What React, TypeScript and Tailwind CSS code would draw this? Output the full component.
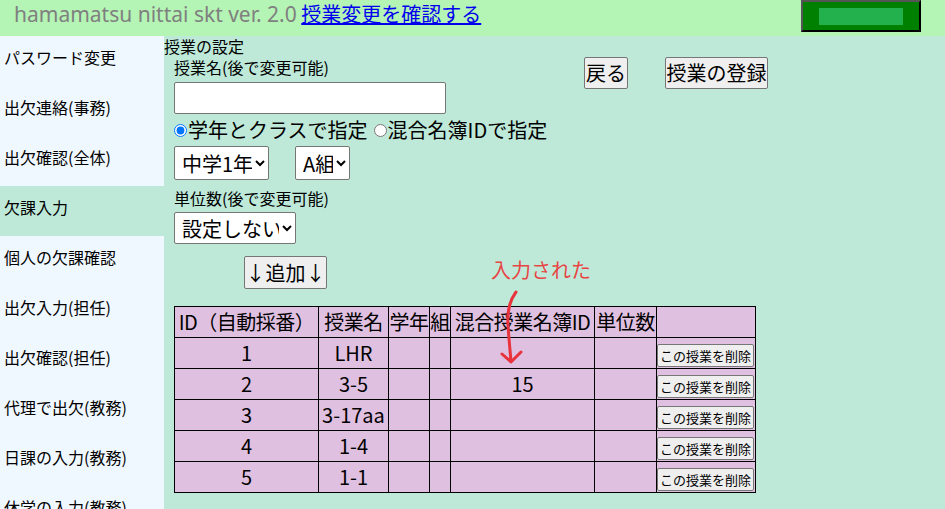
import React from "react";

const menu = [
  "パスワード変更",
  "出欠連絡(事務)",
  "出欠確認(全体)",
  "欠課入力",
  "個人の欠課確認",
  "出欠入力(担任)",
  "出欠確認(担任)",
  "代理で出欠(教務)",
  "日課の入力(教務)",
  "休学の入力(教務)",
];

const rows = [
  { id: "1", name: "LHR", mix: "" },
  { id: "2", name: "3-5", mix: "15" },
  { id: "3", name: "3-17aa", mix: "" },
  { id: "4", name: "1-4", mix: "" },
  { id: "5", name: "1-1", mix: "" },
];

const font = "font-['Noto_Sans_CJK_JP','Noto_Sans',sans-serif]";

const App = () => {
  return (
    <div className={`relative w-[945px] h-[509px] overflow-hidden bg-[#bee9d8] text-black ${font}`}>
      <header className="flex h-[36px] bg-[#b4f4b4]">
        <div className="pl-[14px] pt-[1px] text-[20px] leading-[26px]">
          <span className="text-[21px] text-[#808080] font-['Noto_Sans',sans-serif]">hamamatsu nittai skt ver. 2.0</span>{" "}
          <a href="#" className="text-[#0000ee] underline">
            授業変更を確認する
          </a>
        </div>
        <div className="ml-auto mr-[24px] flex h-[32px] w-[120px] items-center justify-center border-2 border-t-[#555] border-l-[#555] border-r-black border-b-black bg-[#008000]">
          <div className="h-[17px] w-[84px] bg-[#22b14c]" />
        </div>
      </header>

      <div className="flex">
        <nav className="w-[164px] shrink-0 bg-[#f0f8ff]">
          {menu.map((m) => (
            <div
              key={m}
              className={`h-[50px] pl-[4px] pt-[10px] text-[16px] leading-[22px] ${m === "欠課入力" ? "bg-[#bee9d8]" : ""}`}
            >
              {m}
            </div>
          ))}
        </nav>

        <main className="flex-1">
          <div className="text-[16px] leading-[21px]">授業の設定</div>
          <div className="pl-[10px]">
            <div className="flex">
              <div className="flex w-[410px] flex-col">
                <div className="text-[16px] leading-[20px]">授業名(後で変更可能)</div>
                <input
                  type="text"
                  className="mt-[5px] h-[32px] w-[272px] rounded-[2px] border border-[#767676] bg-white"
                />
                <div className="mt-[4px] flex h-[24px] items-center whitespace-nowrap text-[20px] leading-[24px]">
                  <input type="radio" name="mode" defaultChecked className="m-0 mr-[1px] h-[13px] w-[13px]" />
                  <span>学年とクラスで指定</span>
                  <input type="radio" name="mode" className="m-0 ml-[6px] mr-[1px] h-[13px] w-[13px]" />
                  <span>混合名簿IDで指定</span>
                </div>
                <div className="mt-[4px] flex h-[34px] gap-[26px]">
                  <select className="h-[34px] w-[95px] rounded-[2px] border border-[#767676] bg-white pl-[3px] text-[20px]">
                    <option>中学1年</option>
                  </select>
                  <select className="h-[34px] w-[55px] rounded-[2px] border border-[#767676] bg-white pl-[3px] text-[20px]">
                    <option>A組</option>
                  </select>
                </div>
                <div className="mt-[8px] text-[16px] leading-[20px]">単位数(後で変更可能)</div>
                <select className="mt-[4px] h-[32px] w-[122px] rounded-[2px] border border-[#767676] bg-white pl-[3px] text-[20px]">
                  <option>設定しない</option>
                </select>
                <button className="mt-[12px] ml-[70px] h-[33px] w-[83px] rounded-[2px] border border-[#767676] bg-[#efefef] text-[20px] leading-[24px]">
                  ↓追加↓
                </button>
              </div>
              <div className="flex items-start gap-[37px]">
                <button className="h-[32px] w-[44px] rounded-[2px] border border-[#767676] bg-[#efefef] text-[20px] leading-[24px]">
                  戻る
                </button>
                <button className="h-[32px] w-[103px] rounded-[2px] border border-[#767676] bg-[#efefef] text-[20px] leading-[24px]">
                  授業の登録
                </button>
              </div>
            </div>

            <table className="mt-[17px] table-fixed border-collapse bg-[#e0c0e0] text-[20px] leading-[24px]">
              <colgroup>
                <col className="w-[144px]" />
                <col className="w-[70px]" />
                <col className="w-[41px]" />
                <col className="w-[21px]" />
                <col className="w-[144px]" />
                <col className="w-[62px]" />
                <col className="w-[99px]" />
              </colgroup>
              <tbody>
                <tr className="h-[31px]">
                  {["ID（自動採番）", "授業名", "学年", "組", "混合授業名簿ID", "単位数", ""].map((h, i) => (
                    <td key={i} className="whitespace-nowrap border border-black p-0 text-center tracking-[-0.5px]">
                      {h}
                    </td>
                  ))}
                </tr>
                {rows.map((r) => (
                  <tr key={r.id} className="h-[31px]">
                    <td className="border border-black p-0 text-center">{r.id}</td>
                    <td className="border border-black p-0 text-center whitespace-nowrap">{r.name}</td>
                    <td className="border border-black p-0" />
                    <td className="border border-black p-0" />
                    <td className="border border-black p-0 text-center">{r.mix}</td>
                    <td className="border border-black p-0" />
                    <td className="border border-black p-0 pb-[1px] align-bottom">
                      <button className="block h-[23px] w-[97px] rounded-[2px] border border-[#767676] bg-[#efefef] text-[13px] leading-[18px]">
                        この授業を削除
                      </button>
                    </td>
                  </tr>
                ))}
              </tbody>
            </table>
          </div>
        </main>
      </div>

      <div className="absolute left-[491px] top-[258px] text-[20px] leading-[24px] text-[#e84545]">入力された</div>
      <svg className="pointer-events-none absolute left-0 top-0" width="945" height="509" viewBox="0 0 945 509">
        <path
          d="M516 292 C 510 300, 507 310, 508 325 S 510 350, 511 361 M502 354 L511 362 L521 352"
          fill="none"
          stroke="#e8323c"
          strokeWidth="3"
          strokeLinecap="round"
          strokeLinejoin="round"
        />
      </svg>
    </div>
  );
};

export default App;
